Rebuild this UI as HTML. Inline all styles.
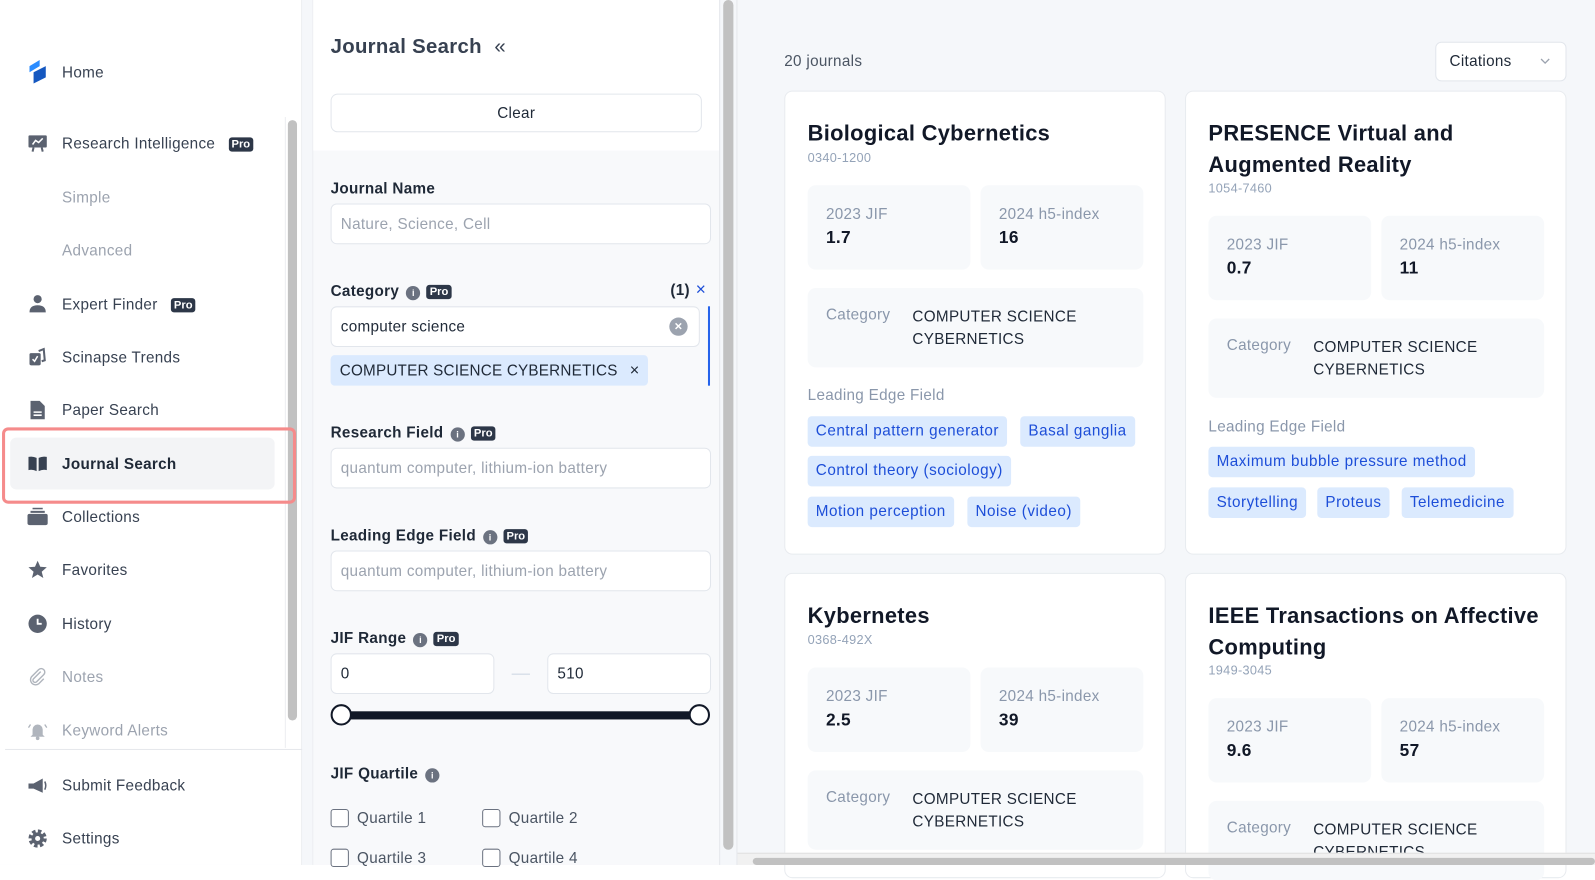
<!DOCTYPE html>
<html><head><meta charset="utf-8">
<style>
*{box-sizing:border-box;margin:0;padding:0}
html,body{width:1595px;height:865px;overflow:hidden;background:#fff;font-family:"Liberation Sans",Arial,sans-serif;letter-spacing:0.3px}
#w{position:absolute;left:0;top:0;width:1568px;height:850px;transform:scale(1.0172,1.0176);transform-origin:0 0;background:#f5f7fa}
.a{position:absolute}
.nav{position:absolute;left:61px;font-size:15px;color:#374151;white-space:nowrap;margin-top:2px}
.nav.dim{color:#9ca3af}
.ic{position:absolute;left:27px;width:20px;height:20px}
.pro{display:inline-block;background:#2d3748;color:#fff;font-size:11px;font-weight:bold;padding:1px 3px;border-radius:3px;margin-left:13px;vertical-align:1px;letter-spacing:0}
.lbl{position:absolute;left:325px;font-size:15px;font-weight:bold;color:#1f2937;margin-top:1px}
.info{display:inline-block;width:14px;height:14px;border-radius:50%;background:#6b7280;color:#fff;font-size:9px;text-align:center;line-height:14px;font-weight:bold;margin-left:7px;vertical-align:0}
.inp{position:absolute;background:#fff;border:1px solid #e2e6ec;border-radius:6px;height:40px;font-size:15px;color:#9ca3af;padding:0 9px;line-height:40px}
.card{position:absolute;background:#fff;border:1px solid #e8ebef;border-radius:8px}
.t{position:absolute;left:22px;font-size:21.5px;font-weight:bold;color:#111827;line-height:31px}
.iss{position:absolute;left:22px;font-size:12.5px;color:#94a3b8}
.box{position:absolute;background:#f7f9fb;border-radius:8px}
.bl{position:absolute;left:18px;top:20px;font-size:15px;color:#8a97ab}
.bv{position:absolute;left:18px;top:42px;font-size:17px;font-weight:bold;color:#111827}
.cv{position:absolute;left:103px;top:18px;font-size:15px;color:#1f2937;line-height:22px}
.tag{position:absolute;background:#dbeafe;color:#1d4ed8;font-size:15px;border-radius:4px;height:30px;line-height:30px;padding:0 8px;white-space:nowrap;letter-spacing:0.5px}
.chk{position:absolute;width:18px;height:18px;border:1.5px solid #6b7280;border-radius:3px;background:#fff}
.ql{position:absolute;font-size:15px;color:#4b5563}
</style></head><body><div id="w">

<div class="a" style="left:0;top:0;width:297px;height:850px;background:#fff;border-right:1px solid #eceef1"></div>
<svg class="a" style="left:27px;top:59px" width="22" height="24" viewBox="0 0 22 24"><path d="M2 6 L12 0 L12 6 L2 12Z" fill="#2b8cff"/><path d="M6 12 L18 6 L18 17 L6 23Z" fill="#1558c0"/></svg>
<div class="nav" style="top:61px">Home</div>
<div class="a" style="left:283px;top:118px;width:9px;height:590px;background:#c1c1c1;border-radius:5px"></div>
<div class="a" style="left:280px;top:115px;width:1px;height:620px;background:#eceef1"></div>

<svg class="ic" style="top:131px" viewBox="0 0 20 20"><rect x="1" y="2" width="18" height="12" rx="1" fill="#5b6270"/><path d="M5 11 L8 7 L11 9 L15 5" stroke="#fff" stroke-width="1.5" fill="none"/><path d="M6 14 L5 18 M14 14 L15 18" stroke="#5b6270" stroke-width="2"/></svg>
<div class="nav" style="top:131px">Research Intelligence<span class="pro">Pro</span></div>
<div class="nav dim" style="top:184px">Simple</div>
<div class="nav dim" style="top:236px">Advanced</div>
<svg class="ic" style="top:289px" viewBox="0 0 20 20"><circle cx="10" cy="5" r="4" fill="#5b6270"/><path d="M2 18 Q2 11 10 11 Q18 11 18 18Z" fill="#5b6270"/></svg>
<div class="nav" style="top:289px">Expert Finder<span class="pro">Pro</span></div>
<svg class="ic" style="top:341px" viewBox="0 0 20 20"><rect x="2" y="6" width="11" height="12" rx="1.5" fill="#5b6270"/><path d="M11 4 L16 2 L17 13 L14 14" stroke="#5b6270" stroke-width="2" fill="none"/><path d="M5 12 L7 14 L10 9" stroke="#fff" stroke-width="1.5" fill="none"/></svg>
<div class="nav" style="top:341px">Scinapse Trends</div>
<svg class="ic" style="top:393px" viewBox="0 0 20 20"><path d="M3 1 H12 L17 6 V19 H3Z" fill="#5b6270"/><path d="M6 12 H14 M6 15 H14" stroke="#fff" stroke-width="1.5"/></svg>
<div class="nav" style="top:393px">Paper Search</div>
<div class="a" style="left:10px;top:430px;width:260px;height:51px;background:#f3f4f6;border-radius:6px"></div>
<div class="a" style="left:2px;top:420px;width:289px;height:75px;border:3px solid #f58b8b;border-radius:6px"></div>
<svg class="ic" style="top:446px" viewBox="0 0 20 20"><path d="M1 3 Q5 2 9 4 V17 Q5 15 1 16Z M11 4 Q15 2 19 3 V16 Q15 15 11 17Z" fill="#374151"/></svg>
<div class="nav" style="top:446px;font-weight:bold;color:#1f2937">Journal Search</div>
<svg class="ic" style="top:498px" viewBox="0 0 20 20"><rect x="5" y="1" width="10" height="1.5" fill="#5b6270"/><rect x="3" y="4" width="14" height="2" fill="#5b6270"/><rect x="0" y="7" width="20" height="11" rx="2" fill="#5b6270"/></svg>
<div class="nav" style="top:498px">Collections</div>
<svg class="ic" style="top:550px" viewBox="0 0 20 20"><path d="M10 1 L12.6 7 L19 7.5 L14 11.8 L15.6 18 L10 14.6 L4.4 18 L6 11.8 L1 7.5 L7.4 7Z" fill="#5b6270"/></svg>
<div class="nav" style="top:550px">Favorites</div>
<svg class="ic" style="top:603px" viewBox="0 0 20 20"><circle cx="10" cy="10" r="9" fill="#5b6270"/><path d="M10 5 V10 H14" stroke="#fff" stroke-width="1.8" fill="none"/></svg>
<div class="nav" style="top:603px">History</div>
<svg class="ic" style="top:655px" viewBox="0 0 20 20"><path d="M13 5 L6 12 A2 2 0 0 0 9 15 L16 8 A3.5 3.5 0 0 0 11 3 L4 10 A5 5 0 0 0 11 17 L16 12" stroke="#b0b5bd" stroke-width="1.4" fill="none"/></svg>
<div class="nav dim" style="top:655px">Notes</div>
<svg class="ic" style="top:708px" viewBox="0 0 20 20"><path d="M5 14 V9 A5 5 0 0 1 15 9 V14 L17 16 H3Z" fill="#b0b5bd"/><circle cx="10" cy="17.5" r="1.8" fill="#b0b5bd"/><path d="M3 4 L1 7 M17 4 L19 7" stroke="#b0b5bd" stroke-width="1.3"/></svg>
<div class="nav dim" style="top:708px">Keyword Alerts</div>
<div class="a" style="left:5px;top:736px;width:292px;height:1px;background:#e5e7eb"></div>
<svg class="ic" style="top:762px" viewBox="0 0 20 20"><path d="M1 8 H6 L15 3 V17 L6 13 H1Z" fill="#5b6270"/><path d="M17 6 Q19 10 17 14" stroke="#5b6270" stroke-width="1.5" fill="none"/></svg>
<div class="nav" style="top:762px">Submit Feedback</div>
<svg class="ic" style="top:814px" viewBox="0 0 20 20"><circle cx="10" cy="10" r="7" fill="none" stroke="#5b6270" stroke-width="4" stroke-dasharray="3.3 2.2"/><circle cx="10" cy="10" r="6" fill="#5b6270"/><circle cx="10" cy="10" r="2.5" fill="#fff"/></svg>
<div class="nav" style="top:814px">Settings</div>

<div class="a" style="left:307px;top:0;width:400px;height:850px;background:#f8f9fb;border-left:1px solid #eceef1"></div>
<div class="a" style="left:308px;top:0;width:399px;height:148px;background:#fff"></div>
<div class="a" style="left:711px;top:0;width:10px;height:835px;background:#c1c1c1;border-radius:5px"></div>
<div class="a" style="left:707px;top:0;width:1px;height:850px;background:#e5e7eb"></div>
<div class="a" style="left:724px;top:0;width:1px;height:850px;background:#e5e7eb"></div>
<div class="a" style="left:325px;top:35px;font-size:20px;font-weight:bold;color:#374151">Journal Search</div>
<div class="a" style="left:486px;top:35px;font-size:20px;color:#374151">&laquo;</div>
<div class="a" style="left:325px;top:92px;width:365px;height:38px;border:1px solid #e2e6ec;border-radius:7px;background:#fff;text-align:center;line-height:38px;font-size:15px;color:#1f2937">Clear</div>

<div class="lbl" style="top:176px">Journal Name</div>
<div class="inp" style="left:325px;top:200px;width:374px">Nature, Science, Cell</div>

<div class="lbl" style="top:277px">Category<span class="info">i</span><span class="pro" style="margin-left:6px">Pro</span></div>
<div class="a" style="left:659px;top:277px;font-size:15px;font-weight:bold;color:#1f2937">(1)</div>
<div class="a" style="left:684px;top:275px;font-size:17px;color:#1d4ed8">×</div>
<div class="inp" style="left:325px;top:301px;width:363px;color:#1f2937">computer science</div>
<div class="a" style="left:658px;top:312px;width:18px;height:18px;border-radius:50%;background:#9ca3af;color:#fff;font-size:13px;text-align:center;line-height:17px;font-weight:bold">×</div>
<div class="a" style="left:696px;top:301px;width:2px;height:78px;background:#2563eb"></div>
<div class="a" style="left:325px;top:349px;width:312px;height:30px;background:#dbeafe;border-radius:4px;font-size:15px;color:#1f2937;line-height:31px;padding-left:9px;white-space:nowrap;letter-spacing:0.2px">COMPUTER SCIENCE CYBERNETICS<span style="margin-left:12px;font-size:16px">×</span></div>

<div class="lbl" style="top:416px">Research Field<span class="info">i</span><span class="pro" style="margin-left:6px">Pro</span></div>
<div class="inp" style="left:325px;top:440px;width:374px">quantum computer, lithium-ion battery</div>
<div class="lbl" style="top:517px">Leading Edge Field<span class="info">i</span><span class="pro" style="margin-left:6px">Pro</span></div>
<div class="inp" style="left:325px;top:541px;width:374px">quantum computer, lithium-ion battery</div>
<div class="lbl" style="top:618px">JIF Range<span class="info">i</span><span class="pro" style="margin-left:6px">Pro</span></div>
<div class="inp" style="left:325px;top:642px;width:161px;color:#1f2937">0</div>
<div class="a" style="left:503px;top:662px;width:18px;height:1px;background:#cbd5e1"></div>
<div class="inp" style="left:538px;top:642px;width:161px;color:#1f2937">510</div>
<div class="a" style="left:335px;top:699px;width:352px;height:8px;background:#111827"></div>
<div class="a" style="left:325px;top:692px;width:21px;height:21px;border-radius:50%;background:#fff;border:2px solid #111827"></div>
<div class="a" style="left:677px;top:692px;width:21px;height:21px;border-radius:50%;background:#fff;border:2px solid #111827"></div>
<div class="lbl" style="top:751px">JIF Quartile<span class="info">i</span></div>
<div class="chk" style="left:325px;top:795px"></div><div class="ql" style="left:351px;top:796px">Quartile 1</div>
<div class="chk" style="left:474px;top:795px"></div><div class="ql" style="left:500px;top:796px">Quartile 2</div>
<div class="chk" style="left:325px;top:834px"></div><div class="ql" style="left:351px;top:835px">Quartile 3</div>
<div class="chk" style="left:474px;top:834px"></div><div class="ql" style="left:500px;top:835px">Quartile 4</div>

<div class="a" style="left:771px;top:52px;font-size:15px;color:#4b5563">20 journals</div>
<div class="a" style="left:1411px;top:41px;width:129px;height:39px;background:#fff;border:1px solid #e2e6ec;border-radius:6px;font-size:15px;color:#1f2937;line-height:37px;padding-left:13px">Citations<svg style="position:absolute;right:15px;top:15px" width="10" height="7" viewBox="0 0 10 7"><path d="M1 1 L5 5 L9 1" stroke="#9ca3af" stroke-width="1.3" fill="none"/></svg></div>

<div class="card" style="left:771px;top:89px;width:375px;height:456px">
 <div class="t" style="top:26px">Biological Cybernetics</div>
 <div class="iss" style="top:58px">0340-1200</div>
 <div class="box" style="left:22px;top:92px;width:160px;height:83px"><div class="bl">2023 JIF</div><div class="bv">1.7</div></div>
 <div class="box" style="left:192px;top:92px;width:160px;height:83px"><div class="bl">2024 h5-index</div><div class="bv">16</div></div>
 <div class="box" style="left:22px;top:193px;width:330px;height:78px"><div class="bl" style="top:18px">Category</div><div class="cv">COMPUTER SCIENCE<br>CYBERNETICS</div></div>
 <div class="a" style="left:22px;top:290px;font-size:15px;color:#8a97ab">Leading Edge Field</div>
 <div class="tag" style="left:22px;top:319px">Central pattern generator</div>
 <div class="tag" style="left:231px;top:319px">Basal ganglia</div>
 <div class="tag" style="left:22px;top:358px">Control theory (sociology)</div>
 <div class="tag" style="left:22px;top:398px">Motion perception</div>
 <div class="tag" style="left:179px;top:398px">Noise (video)</div>
</div>

<div class="card" style="left:1165px;top:89px;width:375px;height:456px">
 <div class="t" style="top:26px">PRESENCE Virtual and<br>Augmented Reality</div>
 <div class="iss" style="top:88px">1054-7460</div>
 <div class="box" style="left:22px;top:122px;width:160px;height:83px"><div class="bl">2023 JIF</div><div class="bv">0.7</div></div>
 <div class="box" style="left:192px;top:122px;width:160px;height:83px"><div class="bl">2024 h5-index</div><div class="bv">11</div></div>
 <div class="box" style="left:22px;top:223px;width:330px;height:78px"><div class="bl" style="top:18px">Category</div><div class="cv">COMPUTER SCIENCE<br>CYBERNETICS</div></div>
 <div class="a" style="left:22px;top:321px;font-size:15px;color:#8a97ab">Leading Edge Field</div>
 <div class="tag" style="left:22px;top:349px">Maximum bubble pressure method</div>
 <div class="tag" style="left:22px;top:389px">Storytelling</div>
 <div class="tag" style="left:129px;top:389px">Proteus</div>
 <div class="tag" style="left:212px;top:389px">Telemedicine</div>
</div>

<div class="card" style="left:771px;top:563px;width:375px;height:300px">
 <div class="t" style="top:26px">Kybernetes</div>
 <div class="iss" style="top:58px">0368-492X</div>
 <div class="box" style="left:22px;top:92px;width:160px;height:83px"><div class="bl">2023 JIF</div><div class="bv">2.5</div></div>
 <div class="box" style="left:192px;top:92px;width:160px;height:83px"><div class="bl">2024 h5-index</div><div class="bv">39</div></div>
 <div class="box" style="left:22px;top:193px;width:330px;height:78px"><div class="bl" style="top:18px">Category</div><div class="cv">COMPUTER SCIENCE<br>CYBERNETICS</div></div>
</div>

<div class="card" style="left:1165px;top:563px;width:375px;height:300px">
 <div class="t" style="top:26px">IEEE Transactions on Affective<br>Computing</div>
 <div class="iss" style="top:88px">1949-3045</div>
 <div class="box" style="left:22px;top:122px;width:160px;height:83px"><div class="bl">2023 JIF</div><div class="bv">9.6</div></div>
 <div class="box" style="left:192px;top:122px;width:160px;height:83px"><div class="bl">2024 h5-index</div><div class="bv">57</div></div>
 <div class="box" style="left:22px;top:223px;width:330px;height:78px"><div class="bl" style="top:18px">Category</div><div class="cv">COMPUTER SCIENCE<br>CYBERNETICS</div></div>
</div>

<div class="a" style="left:725px;top:838px;width:843px;height:12px;background:#f1f1f1;border-top:1px solid #e0e0e0"></div>
<div class="a" style="left:740px;top:843px;width:828px;height:7px;background:#c1c1c1;border-radius:4px"></div>
</div></body></html>
